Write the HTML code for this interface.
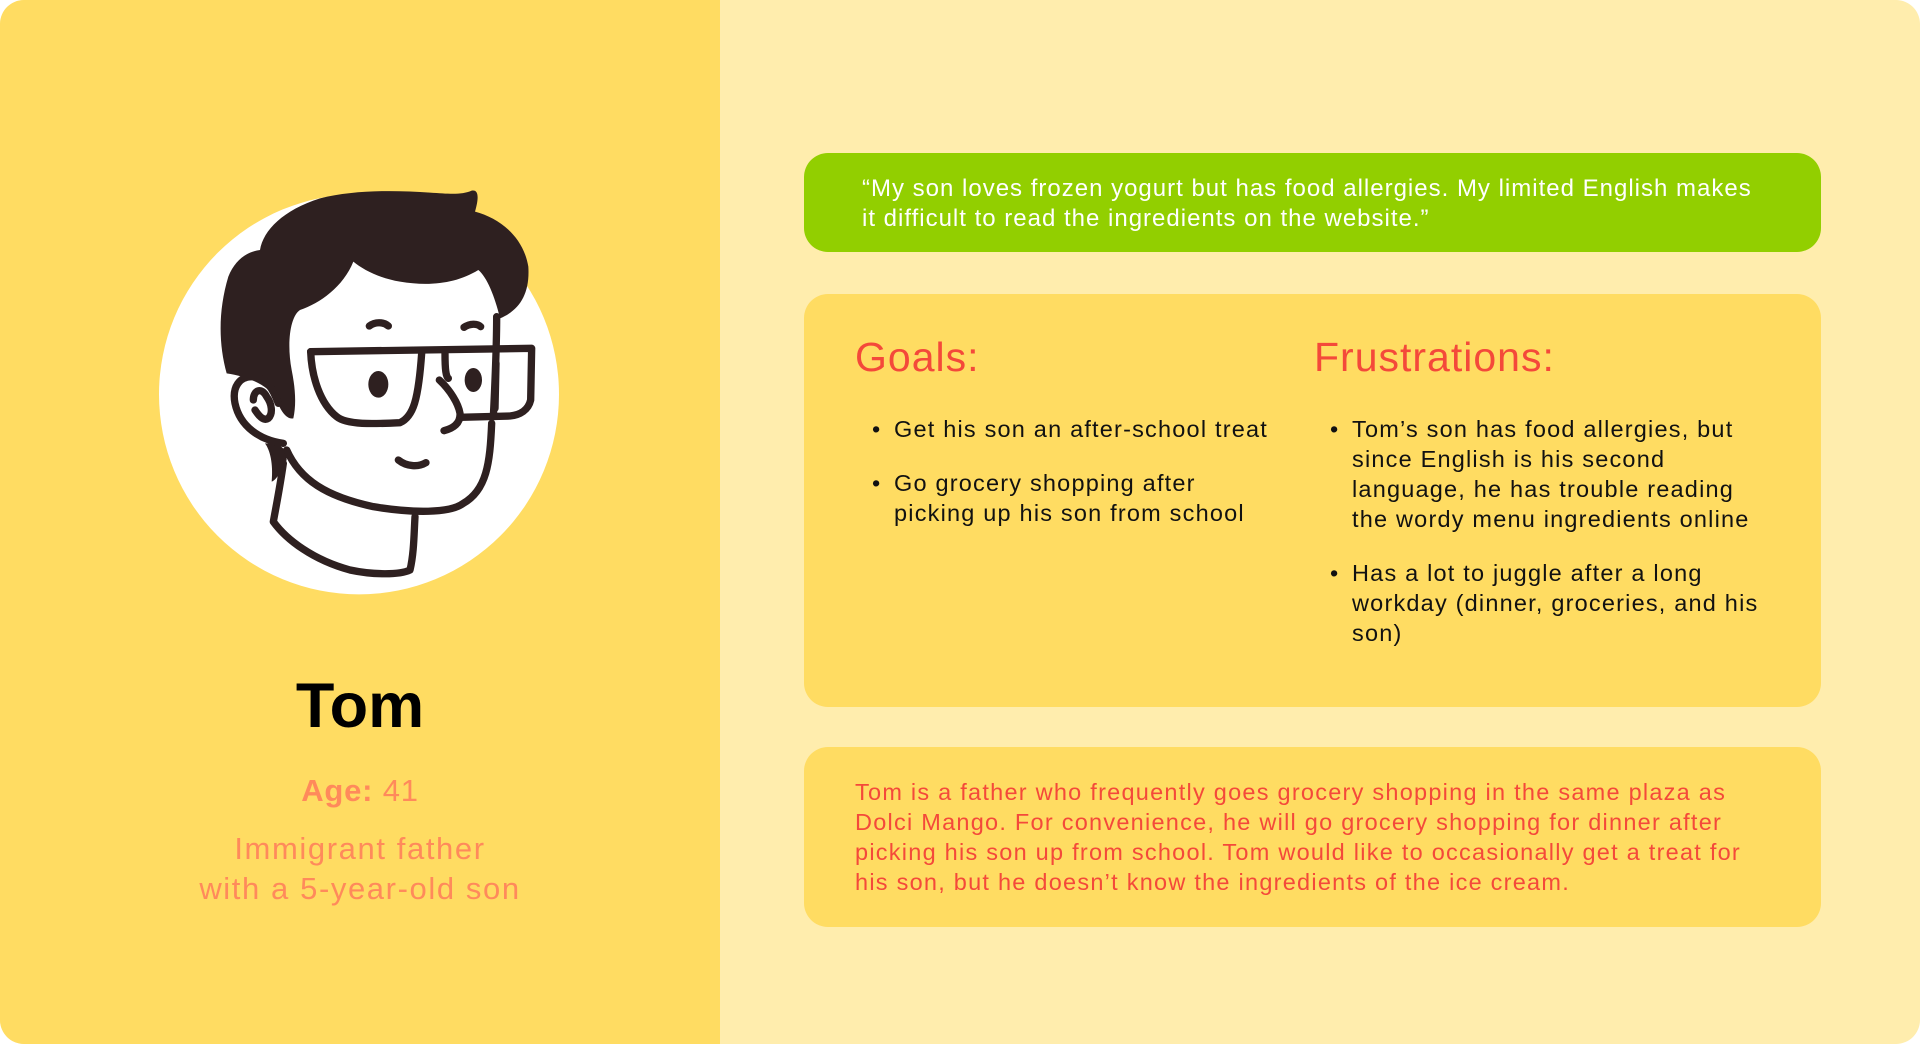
<!DOCTYPE html>
<html><head><meta charset="utf-8"><style>
*{margin:0;padding:0;box-sizing:border-box}
body{width:1920px;height:1044px;background:#fff;font-family:"Liberation Sans",sans-serif;overflow:hidden;position:relative}
#wrap{position:absolute;left:0;top:0;width:1920px;height:1044px;border-radius:24px;overflow:hidden;background:#FFEDAD}
#left{position:absolute;left:0;top:0;width:720px;height:1044px;background:#FFDC62}
.abs{position:absolute}
.c{text-align:center;width:720px;left:0}
.box{position:absolute;left:804px;width:1017px;border-radius:24px}
ul{list-style:none}
li{position:relative;padding-left:22px;margin-bottom:24px;line-height:30px;font-size:23.5px;letter-spacing:1.2px;color:#111;white-space:nowrap}
li:before{content:"•";position:absolute;left:0;top:0}
.bio div{white-space:nowrap}
</style></head><body><div id="wrap">
<div id="left">
 <svg class="abs" style="left:140px;top:170px" width="440" height="440" viewBox="0 0 1320 1320">
  <circle cx="657" cy="673" r="600" fill="#fff"/>
  <g fill="#2E2020">
   <path d="M260 610 C235 520 235 420 265 320 C285 270 320 245 360 240 C370 180 430 120 540 85 C640 60 760 60 870 68 C930 72 965 75 995 62 C1015 58 1018 80 1005 125 C1080 145 1150 200 1165 290 C1170 370 1140 420 1080 445 C1065 380 1040 320 1015 300 C950 340 870 350 780 335 C720 325 670 300 640 275 C610 350 540 400 480 420 C450 440 440 520 455 600 C465 650 470 700 460 745 C440 750 420 720 410 690 C390 650 330 620 260 610Z"/>
   <path d="M375 820 C390 840 400 880 395 935 C410 930 425 900 440 870 C440 840 430 820 375 820Z"/>
  </g>
  <g fill="none" stroke="#2E2020" stroke-width="22" stroke-linecap="round" stroke-linejoin="round">
   <path d="M430 820 C360 810 300 770 285 700 C275 650 300 620 335 620 C380 620 400 660 415 700"/>
   <path d="M340 690 C340 660 365 650 380 680 C395 700 400 730 385 745 C370 755 355 735 345 720"/>
   <path d="M440 840 C480 930 560 980 700 1010 C820 1030 930 1030 970 1000 C1040 960 1050 880 1055 760"/>
   <path d="M1060 740 C1065 640 1070 520 1070 440"/>
   <path d="M430 880 C420 950 410 1000 400 1055 C440 1110 520 1170 630 1200 C700 1215 780 1215 810 1200 C822 1150 822 1090 825 1040"/>
   <path d="M512 545 L1175 535 L1172 690 C1165 720 1140 735 1110 738 L960 742"/>
   <path d="M512 545 C515 620 540 700 590 740 C620 765 700 762 780 758 C820 740 835 690 845 550"/>
   <path d="M915 550 C915 600 918 620 925 625"/>
   <path d="M1068 580 L1065 715"/>
   <path d="M898 630 C930 660 955 700 960 730 C962 760 940 775 912 782"/>
   <path d="M688 468 C705 455 730 455 745 468"/>
   <path d="M972 472 C990 460 1012 460 1022 470"/>
   <path d="M775 870 C800 890 835 892 858 878"/>
  </g>
  <ellipse cx="715" cy="643" rx="30" ry="40" fill="#2E2020"/>
  <ellipse cx="1000" cy="630" rx="26" ry="36" fill="#2E2020"/>
 </svg>
 <div class="abs c" style="top:666px;font-size:63px;font-weight:bold;color:#000;line-height:80px">Tom</div>
 <div class="abs c" style="top:772px;font-size:31px;color:#FF8A5B;line-height:38px;letter-spacing:0.8px"><b>Age:</b> 41</div>
 <div class="abs c" style="top:829px;font-size:31px;color:#FF8A5B;line-height:40px;letter-spacing:1.6px">Immigrant father<br>with a 5-year-old son</div>
</div>
<div class="box" style="top:153px;height:99px;background:#92CF00;color:#fff;font-size:24px;letter-spacing:1px;line-height:30px;padding:21px 0 0 58px">
 <div style="white-space:nowrap">“My son loves frozen yogurt but has food allergies. My limited English makes</div>
 <div>it difficult to read the ingredients on the website.”</div>
</div>
<div class="box" style="top:294px;height:413px;background:#FFDC62">
 <div class="abs" style="left:51px;top:40px;font-size:41px;letter-spacing:1px;color:#F4493A">Goals:</div>
 <div class="abs" style="left:510px;top:40px;font-size:41px;letter-spacing:1px;color:#F4493A">Frustrations:</div>
 <ul class="abs" style="left:68px;top:120px;width:420px">
  <li>Get his son an after-school treat</li>
  <li>Go grocery shopping after<br>picking up his son from school</li>
 </ul>
 <ul class="abs" style="left:526px;top:120px;width:450px">
  <li>Tom’s son has food allergies, but<br>since English is his second<br>language, he has trouble reading<br>the wordy menu ingredients online</li>
  <li>Has a lot to juggle after a long<br>workday (dinner, groceries, and his<br>son)</li>
 </ul>
</div>
<div class="box bio" style="top:747px;height:180px;background:#FFDC62;color:#F4493A;font-size:23.5px;letter-spacing:1.25px;line-height:30px;padding:30px 0 0 51px">
 <div>Tom is a father who frequently goes grocery shopping in the same plaza as</div>
 <div>Dolci Mango. For convenience, he will go grocery shopping for dinner after</div>
 <div>picking his son up from school. Tom would like to occasionally get a treat for</div>
 <div>his son, but he doesn’t know the ingredients of the ice cream.</div>
</div>
</div></body></html>
